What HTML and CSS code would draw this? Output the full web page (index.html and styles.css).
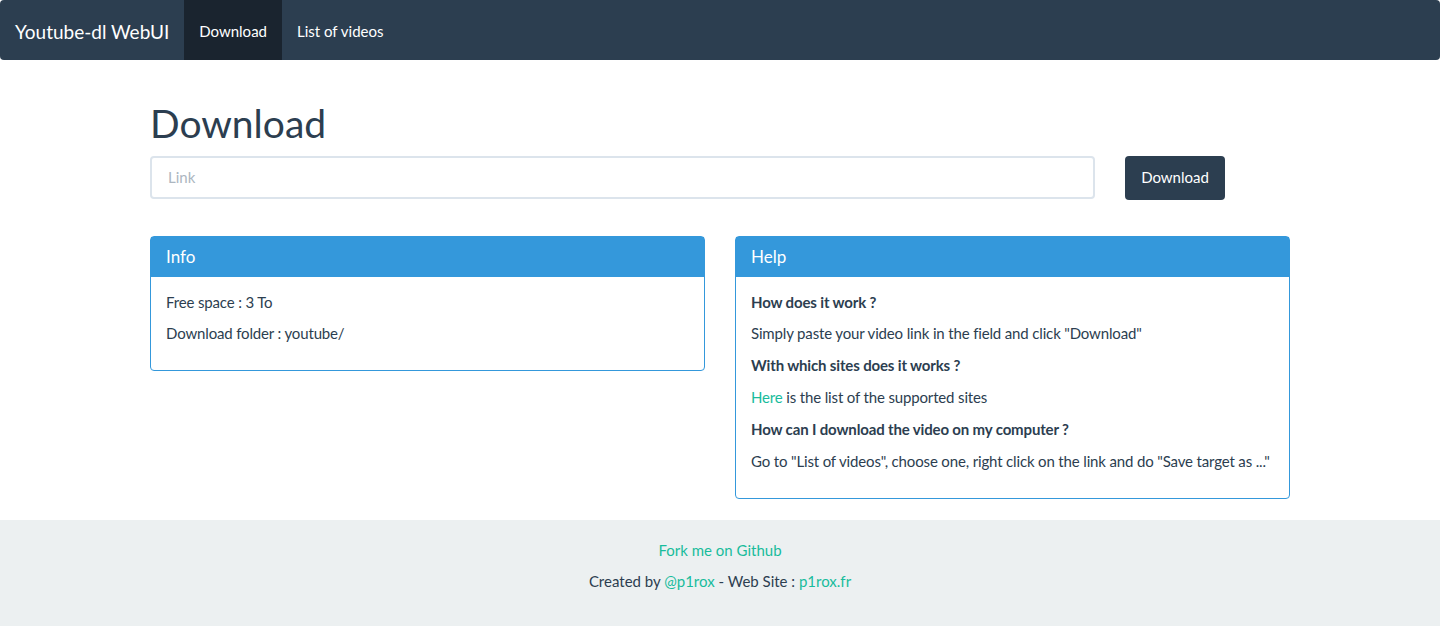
FILE: index.html
```html
<!DOCTYPE html>
<html lang="en">
<head>
<meta charset="utf-8">
<title>Youtube-dl WebUI</title>
<link rel="stylesheet" href="styles.css">
</head>
<body>
<nav class="navbar">
  <a class="brand" href="#">Youtube-dl WebUI</a>
  <ul class="nav">
    <li><a class="nav-link active" href="#">Download</a></li>
    <li><a class="nav-link" href="#">List of videos</a></li>
  </ul>
</nav>
<main class="container">
  <h1 class="title">Download</h1>
  <form class="dl-form">
    <div class="col-input"><input class="form-control" type="text" placeholder="Link"></div>
    <div class="col-btn"><button class="btn" type="button">Download</button></div>
  </form>
  <div class="panels">
    <section class="panel">
      <div class="panel-heading"><h3 class="panel-title">Info</h3></div>
      <div class="panel-body">
        <p>Free space : 3 To</p>
        <p>Download folder : youtube/</p>
      </div>
    </section>
    <section class="panel">
      <div class="panel-heading"><h3 class="panel-title">Help</h3></div>
      <div class="panel-body">
        <p><b>How does it work ?</b></p>
        <p>Simply paste your video link in the field and click "Download"</p>
        <p><b>With which sites does it works ?</b></p>
        <p><a href="#">Here</a> is the list of the supported sites</p>
        <p><b>How can I download the video on my computer ?</b></p>
        <p class="nowrap">Go to "List of videos", choose one, right click on the link and do "Save target as ..."</p>
      </div>
    </section>
  </div>
</main>
<footer class="footer">
  <p><a href="#">Fork me on Github</a></p>
  <p>Created by <a href="#">@p1rox</a> - Web Site : <a href="#">p1rox.fr</a></p>
</footer>
</body>
</html>
```
FILE: styles.css
```css
* { box-sizing: border-box; }
html, body { margin: 0; padding: 0; }
body {
  font-family: Lato, "Helvetica Neue", Helvetica, Arial, sans-serif;
  font-size: 15px;
  line-height: 1.428571429;
  color: #2c3e50;
  background: #fff;
}
a { color: #18bc9c; text-decoration: none; }
p { margin: 0 0 10.5px; }

.navbar {
  height: 60px;
  background: #2c3e50;
  border-radius: 4px;
  display: flex;
  align-items: stretch;
  margin-bottom: 21px;
}
.brand {
  color: #fff;
  font-size: 19px;
  line-height: 21px;
  padding: 20.5px 15px 18.5px;
  height: 60px;
}
.nav { list-style: none; margin: 0; padding: 0; display: flex; }
.nav-link {
  display: block;
  color: #fff;
  font-size: 15px;
  line-height: 21px;
  padding: 20.5px 15px 18.5px;
  height: 60px;
}
.nav-link.active { background: #1a242f; }

.container {
  width: 1140px;
  margin: 0 auto;
  display: flow-root;
}
.title {
  font-size: 39px;
  font-weight: 400;
  line-height: 43px;
  margin: 21px 0 10.5px;
}
.dl-form {
  display: flex;
  gap: 30px;
  margin-bottom: 36px;
}
.col-input { width: 945px; }
.col-btn { width: 165px; }
.form-control {
  display: block;
  width: 100%;
  height: 43px;
  padding: 10px 16px;
  font-family: inherit;
  font-size: 15px;
  color: #2c3e50;
  border: 2px solid #dce4ec;
  border-radius: 4px;
  outline: none;
}
.form-control::placeholder { color: #acb6c0; }
.btn {
  height: 44px;
  padding: 10px 15px;
  background: #2c3e50;
  color: #fff;
  border: 0;
  border-radius: 4px;
  font-family: inherit;
  font-size: 15px;
  line-height: 21px;
  width: 100px;
}

.panels {
  display: flex;
  gap: 30px;
  align-items: flex-start;
}
.panel {
  width: 555px;
  border: 1px solid #3498db;
  border-radius: 4px;
  margin-bottom: 21px;
  background: #fff;
}
.panel-heading {
  background: #3498db;
  color: #fff;
  padding: 10px 15px;
  height: 40px;
}
.panel-title {
  margin: 0;
  font-size: 17px;
  font-weight: 400;
  line-height: 20px;
}
.panel-body { padding: 15px; letter-spacing: -0.15px; }
.panel-body b { font-weight: 700; }
.nowrap { white-space: nowrap; }

.footer {
  background: #ecf0f1;
  text-align: center;
  padding: 19.5px 0 20px;
  min-height: 106px;
}
```
